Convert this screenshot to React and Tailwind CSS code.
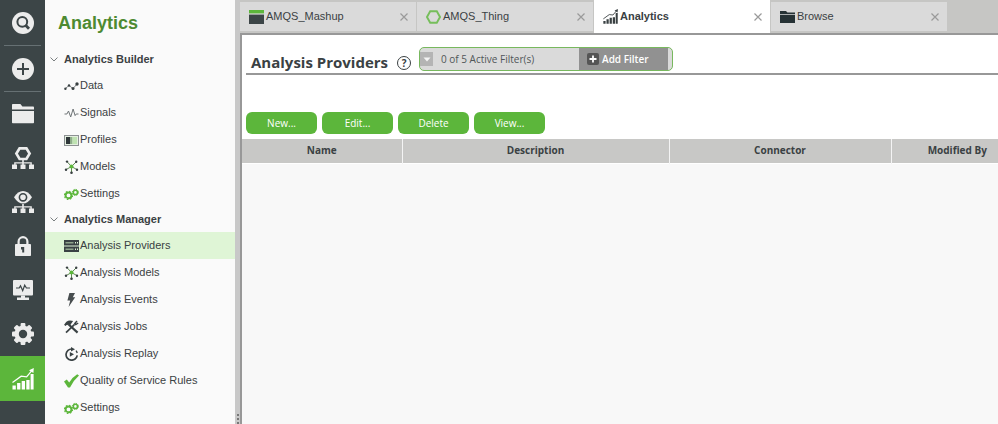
import React, { useState } from 'react';

const SearchIcon = () => (
  <svg viewBox="0 0 22 22" className="h-[22px] w-[22px]">
    <circle cx="11" cy="11" r="11" fill="#ececec" />
    <circle cx="10.3" cy="9.8" r="4.9" fill="none" stroke="#3c4547" strokeWidth="2" />
    <path d="M13.4 13 L17 16.8" stroke="#3c4547" strokeWidth="2.8" />
  </svg>
);

const PlusIcon = () => (
  <svg viewBox="0 0 22 22" className="h-[22px] w-[22px]">
    <circle cx="11" cy="11" r="11" fill="#ececec" />
    <path d="M11 5v12M5 11h12" stroke="#3c4547" strokeWidth="2" />
  </svg>
);

const FolderIcon = () => (
  <svg viewBox="0 0 22 20" className="h-5 w-[22px]" fill="#ececec">
    <path d="M0 0.8 Q0 0 0.8 0 H8.4 L10.4 2.6 H21.2 Q22 2.6 22 3.4 V5.4 H0Z" />
    <path d="M0 7 H22 V18.4 Q22 19.2 21.2 19.2 H0.8 Q0 19.2 0 18.4Z" />
  </svg>
);

const HierarchyBase = () => (
  <path
    d="M10.2 13h1.6v2.3h8v2.2H22V22h-5v-4.5h1.4v-1h-6.6v1h1.7V22h-5v-4.5h1.7v-1H3.6v1H5V22H0v-4.5h2.2v-2.2h8Z"
    fill="#ececec"
  />
);

const ThingsIcon = () => (
  <svg viewBox="0 0 22 22" className="h-[22px] w-[22px]">
    <path d="M7.6 1.3 H14.4 L17.6 6.6 L14.4 12 H7.6 L4.4 6.6Z" fill="none" stroke="#ececec" strokeWidth="2.7" />
    <HierarchyBase />
  </svg>
);

const VisibilityIcon = () => (
  <svg viewBox="0 0 22 22" className="h-[22px] w-[22px]">
    <path d="M2 6.3 Q6 0 11 0 T20 6.3 Q16 12.6 11 12.6 T2 6.3Z" fill="#ececec" />
    <circle cx="11" cy="6.3" r="3.6" fill="none" stroke="#3c4547" strokeWidth="1.6" />
    <HierarchyBase />
  </svg>
);

const LockIcon = () => (
  <svg viewBox="0 0 16 20" className="h-5 w-4">
    <path d="M3.6 9 V5.6 a4.4 4.4 0 0 1 8.8 0 V9" fill="none" stroke="#ececec" strokeWidth="2.2" />
    <rect y="8" width="16" height="12" rx="0.8" fill="#ececec" />
    <path d="M6 11h3.2v5.6H7.2v-3H6Z" fill="#3c4547" />
  </svg>
);

const MonitorIcon = () => (
  <svg viewBox="0 0 22 20" className="h-5 w-[22px]">
    <rect x="1" width="20" height="15.5" rx="1" fill="#ececec" />
    <path d="M9 15.5h4v2h4V20H5v-2.5h4Z" fill="#ececec" />
    <path d="M4 8h3.2l1.3-2.2 2.2 4.8 2-5.4L14.4 8H18" fill="none" stroke="#3c4547" strokeWidth="1.2" />
  </svg>
);

const GearIcon = () => (
  <svg viewBox="0 0 22 22" className="h-[22px] w-[22px]">
    <g fill="#ececec">
      <rect x="8.6" width="4.8" height="22" rx="1" />
      <rect x="8.6" width="4.8" height="22" rx="1" transform="rotate(45 11 11)" />
      <rect x="8.6" width="4.8" height="22" rx="1" transform="rotate(90 11 11)" />
      <rect x="8.6" width="4.8" height="22" rx="1" transform="rotate(135 11 11)" />
      <circle cx="11" cy="11" r="8.6" />
    </g>
    <circle cx="11" cy="11" r="4.2" fill="#3c4547" />
  </svg>
);

const ChartIcon = ({ className }) => (
  <svg viewBox="0 0 22 22" className={className} fill="currentColor">
    <path d="M0.5 17.5h3.3V21.5H0.5ZM5.1 15h3.3v6.5H5.1ZM9.7 13h3.3v8.5H9.7ZM14.3 12h3.3v9.5h-3.3ZM18.6 6h3v15.5h-3Z" />
    <path d="M0.5 14.5 L9.2 8.2 L14.6 8.8 L20.5 1.8" fill="none" stroke="currentColor" strokeWidth="1.3" />
    <path d="M17 2.2 L21.8 0 L21.4 5Z" />
  </svg>
);

const DataIcon = () => (
  <svg viewBox="0 0 15 14" className="h-[14px] w-[15px]" fill="#383f41">
    <path d="M1.2 9.8 L5 6.4 L9 9.6 L13.2 4.8" fill="none" stroke="#6d7375" strokeWidth="0.9" />
    <circle cx="1.4" cy="9.7" r="1.2" />
    <circle cx="5" cy="6.5" r="1.2" />
    <circle cx="9" cy="9.6" r="1.5" />
    <circle cx="13" cy="5" r="1.7" />
  </svg>
);

const SignalsIcon = () => (
  <svg viewBox="0 0 15 14" className="h-[14px] w-[15px]">
    <path d="M0.5 8h2.4l1.6-3 2.2 6 2.4-8 2 6.6L12.2 8h2.3" fill="none" stroke="#6f7577" strokeWidth="1" />
  </svg>
);

const ProfilesIcon = () => (
  <svg viewBox="0 0 15 14" className="h-[14px] w-[15px]">
    <rect x="0.5" y="2.5" width="14" height="10" fill="#e4efe0" stroke="#8d9193" />
    <rect x="2" y="4" width="4" height="7" fill="#2e3638" />
    <rect x="6" y="4" width="2.5" height="7" fill="#8fae8a" />
    <rect x="8.5" y="4" width="4.5" height="7" fill="#bfe3b2" />
  </svg>
);

const ModelsIcon = () => (
  <svg viewBox="0 0 15 14" className="h-[14px] w-[15px]" fill="#383f41">
    <path d="M7.5 6.6 L3 1.6M7.5 6.6 L12.2 1.8M7.5 6.6 L2 9.6M7.5 6.6 L13 9.6M7.5 6.6V13" stroke="#5f8a52" strokeWidth="1" />
    <circle cx="3" cy="1.6" r="1.2" />
    <circle cx="12.2" cy="1.8" r="1.2" />
    <circle cx="2" cy="9.8" r="1.2" />
    <circle cx="13" cy="9.8" r="1.2" />
    <circle cx="7.5" cy="12.7" r="1.3" />
    <circle cx="7.5" cy="6.6" r="2" fill="#5cb63b" />
  </svg>
);

const GearsIcon = () => (
  <svg viewBox="0 0 15 14" className="h-[14px] w-[15px]" fill="none" stroke="#5cb63b">
    <circle cx="4.5" cy="8.4" r="2.9" strokeWidth="1.9" />
    <circle cx="4.5" cy="8.4" r="4.1" strokeWidth="1.1" strokeDasharray="1.61 1.61" />
    <circle cx="11.4" cy="5.4" r="2.1" strokeWidth="1.6" />
    <circle cx="11.4" cy="5.4" r="3.1" strokeWidth="1" strokeDasharray="1.22 1.22" />
  </svg>
);

const ProvidersIcon = () => (
  <svg viewBox="0 0 15 14" className="h-[14px] w-[15px]">
    <path d="M0 1h15v5.4H0ZM0 7.6h15V13H0Z" fill="#3a4244" />
    <path d="M1.5 3h8v1.4h-8ZM1.5 9.6h8v1.4h-8Z" fill="#8fa38c" />
    <path d="M11 3h1v1.4h-1ZM13 3h1v1.4h-1ZM11 9.6h1v1.4h-1ZM13 9.6h1v1.4h-1Z" fill="#dff5d6" />
  </svg>
);

const EventsIcon = () => (
  <svg viewBox="0 0 15 14" className="h-[14px] w-[15px]">
    <path d="M5.4 0 H11 L8.8 4.2 H11.2 L4.6 14 L6.2 7.6 H3.4Z" fill="#474d4f" />
  </svg>
);

const JobsIcon = () => (
  <svg viewBox="0 0 15 14" className="h-[14px] w-[15px]" fill="none" stroke="#3a4244">
    <path d="M4.4 4.2 L13.6 12.6" strokeWidth="2.2" />
    <path d="M0.8 5.4 L3 2.4 Q5 0.9 7.6 1.6 L5.4 4.6" strokeWidth="1.8" fill="#3a4244" />
    <path d="M2 12.6 L10.6 4.4" strokeWidth="1.7" />
    <path d="M13 1 L10.8 3.4 L11.8 4.6 L14.2 3" strokeWidth="1.5" />
  </svg>
);

const ReplayIcon = () => (
  <svg viewBox="0 0 15 14" className="h-[14px] w-[15px]">
    <path d="M8 2 A5.6 5.6 0 1 0 13.2 8.4" fill="none" stroke="#3a4244" strokeWidth="1.7" />
    <path d="M12 3.6 A5.6 5.6 0 0 1 13.2 6" fill="none" stroke="#3a4244" strokeWidth="1.4" />
    <path d="M7 0 L11 2.2 L7 4.4Z" fill="#3a4244" />
    <path d="M5.8 5 L10 7.3 L5.8 9.8Z" fill="#3a4244" />
  </svg>
);

const CheckIcon = () => (
  <svg viewBox="0 0 15 14" className="h-[14px] w-[15px]">
    <path d="M0 7.6 L2.8 5.6 L5.2 8.4 Q8.6 3 13.2 0.2 L15 1.6 Q9.4 6.6 6 13.4 H4Z" fill="#5cb63b" />
  </svg>
);

const MashupIcon = () => (
  <svg viewBox="0 0 15 14" className="h-[14px] w-[15px]">
    <rect width="15" height="3.4" fill="#5cb63b" />
    <rect y="4.6" width="15" height="9.4" fill="#3c4547" />
  </svg>
);

const ThingIcon = () => (
  <svg viewBox="0 0 15 14" className="h-[14px] w-[15px]">
    <path d="M4.2 1.2h6.6L14 7l-3.2 5.8H4.2L1 7Z" fill="none" stroke="#76be5b" strokeWidth="1.9" />
  </svg>
);

const BrowseIcon = () => (
  <svg viewBox="0 0 15 14" className="h-[14px] w-[15px]" fill="#263235">
    <path d="M0 1h6l1.4 1.6H15v1.6H0ZM0 5h15v8H0Z" />
  </svg>
);

const CloseIcon = () => (
  <svg viewBox="0 0 8 8" className="h-2 w-2">
    <path d="M0.5 0.5l7 7M7.5 0.5l-7 7" stroke="#9a9a9a" strokeWidth="1.2" />
  </svg>
);

const Chevron = () => (
  <svg viewBox="0 0 8 5" className="h-[5px] w-2">
    <path d="M0.5 0.5 L4 4 L7.5 0.5" fill="none" stroke="#7a7f80" strokeWidth="1" />
  </svg>
);

const railItems = [
  { label: 'Browse', icon: FolderIcon },
  { label: 'Modeling', icon: ThingsIcon },
  { label: 'Visualization', icon: VisibilityIcon },
  { label: 'Security', icon: LockIcon },
  { label: 'Monitoring', icon: MonitorIcon },
  { label: 'System', icon: GearIcon },
];

const sections = [
  {
    title: 'Analytics Builder',
    items: [
      { label: 'Data', icon: DataIcon },
      { label: 'Signals', icon: SignalsIcon },
      { label: 'Profiles', icon: ProfilesIcon },
      { label: 'Models', icon: ModelsIcon },
      { label: 'Settings', icon: GearsIcon },
    ],
  },
  {
    title: 'Analytics Manager',
    items: [
      { label: 'Analysis Providers', icon: ProvidersIcon, active: true },
      { label: 'Analysis Models', icon: ModelsIcon },
      { label: 'Analysis Events', icon: EventsIcon },
      { label: 'Analysis Jobs', icon: JobsIcon },
      { label: 'Analysis Replay', icon: ReplayIcon },
      { label: 'Quality of Service Rules', icon: CheckIcon },
      { label: 'Settings', icon: GearsIcon },
    ],
  },
];

const tabs = [
  { label: 'AMQS_Mashup', icon: MashupIcon },
  { label: 'AMQS_Thing', icon: ThingIcon },
  { label: 'Analytics', icon: () => <ChartIcon className="h-[15px] w-[15px]" />, active: true },
  { label: 'Browse', icon: BrowseIcon },
];

const actions = ['New...', 'Edit...', 'Delete', 'View...'];

const Rail = () => (
  <div className="flex w-[45px] shrink-0 flex-col bg-[#3c4547]">
    <button aria-label="Search" className="flex h-[45px] items-center justify-center">
      <SearchIcon />
    </button>
    <div className="mx-1 h-px bg-[#667073]" />
    <button aria-label="New" className="flex h-[45px] items-center justify-center">
      <PlusIcon />
    </button>
    <div className="mx-1 h-px bg-[#667073]" />
    {railItems.map(({ label, icon: Icon }) => (
      <button key={label} aria-label={label} className="flex h-11 items-center justify-center">
        <Icon />
      </button>
    ))}
    <button aria-label="Analytics" className="flex h-[45px] items-center justify-center bg-[#5cb63b] text-white">
      <ChartIcon className="h-[22px] w-[22px]" />
    </button>
  </div>
);

const Sidebar = () => (
  <aside className="w-[190px] shrink-0 bg-[#fafafa] pt-2">
    <h2 className="mb-2 pl-[13px] text-[18px] leading-[31px] font-bold text-[#4d8a31]">Analytics</h2>
    <nav>
      {sections.map((section) => (
        <div key={section.title}>
          <button className="flex h-[25px] w-full items-center gap-[6px] pl-[5px] text-[11px] font-bold">
            <Chevron />
            {section.title}
          </button>
          {section.items.map(({ label, icon: Icon, active }) => (
            <a
              key={label}
              href="#"
              className={`flex h-[27px] items-center gap-px pl-[19px] text-[11px] ${active ? 'bg-[#dff5d6]' : ''}`}
            >
              <Icon />
              {label}
            </a>
          ))}
        </div>
      ))}
    </nav>
  </aside>
);

const TabBar = () => (
  <div className="flex h-[33px] shrink-0 gap-px bg-[#c6c6c4]">
    {tabs.map(({ label, icon: Icon, active }) => (
      <div
        key={label}
        className={`flex w-[176px] items-center pr-2 pl-[9px] text-[11px] ${
          active ? 'bg-white font-bold' : 'mt-[2px] mb-[2px] bg-[#dadada]'
        }`}
      >
        <button className="flex flex-1 items-center gap-[2px]">
          <Icon />
          {label}
        </button>
        <button aria-label={`Close ${label}`}>
          <CloseIcon />
        </button>
      </div>
    ))}
  </div>
);

const FilterBar = () => (
  <div className="flex h-6 w-[254px] overflow-hidden rounded-[5px] border border-[#78b85e] bg-[#dadada] text-[10px]">
    <button aria-label="Show filters" className="my-1 flex w-[13px] items-center justify-center bg-[#b4b4b4]">
      <svg viewBox="0 0 8 5" className="h-[5px] w-2">
        <path d="M0.5 0.5h7L4 4.5Z" fill="#f4f4f4" />
      </svg>
    </button>
    <span className="flex flex-1 items-center pl-2 text-[#505658]">0 of 5 Active Filter(s)</span>
    <button className="mr-1 flex w-[89px] items-center gap-[3px] bg-[#919191] pl-2 font-semibold text-white">
      <svg viewBox="0 0 12 12" className="h-3 w-3">
        <rect width="12" height="12" rx="2" fill="#555" />
        <path d="M6 2.5v7M2.5 6h7" stroke="#fff" strokeWidth="1.8" />
      </svg>
      Add Filter
    </button>
  </div>
);

const App = () => {
  const [showHelp, setShowHelp] = useState(false);

  return (
    <div className="flex h-screen overflow-hidden bg-white font-['Liberation_Sans',Arial,sans-serif] text-[#3a4143]">
      <Rail />
      <Sidebar />
      <div className="flex w-[5px] shrink-0 flex-col items-center justify-end gap-[2px] bg-[#c8c8c8]">
        <span className="h-[2px] w-[2px] bg-[#777]" />
        <span className="h-[2px] w-[2px] bg-[#777]" />
        <span className="h-[2px] w-[2px] bg-[#777]" />
      </div>

      <div className="flex min-w-0 flex-1 flex-col">
        <TabBar />
        <main className="flex min-h-0 flex-1 flex-col border-t-2 border-l-2 border-[#989898] font-['Open_Sans','Noto_Sans',sans-serif]">
          <header className="ml-1 flex h-10 items-end border-b-2 border-[#989898] pl-[5px]">
            <h1 className="text-[15px] leading-[22px] font-bold">Analysis Providers</h1>
            <button
              aria-label="Help"
              title={showHelp ? 'Analysis Providers' : undefined}
              onClick={() => setShowHelp(!showHelp)}
              className="mr-2 mb-[3px] ml-[9px] flex h-[14px] w-[14px] items-center justify-center rounded-full border border-[#3a4143] text-[10px] font-bold"
            >
              ?
            </button>
            <div className="mb-[2px]">
              <FilterBar />
            </div>
          </header>

          <div className="mt-[37px] mb-[5px] ml-1 flex gap-[5px]">
            {actions.map((action) => (
              <button key={action} className="h-[22px] w-[71px] rounded-md bg-[#5cb63b] text-[10px] text-white">
                {action}
              </button>
            ))}
          </div>

          <div className="flex-1 overflow-hidden bg-[#f8f8f8]">
            <table className="w-[781px] min-w-full table-fixed border-collapse text-[10px]">
              <thead>
                <tr className="h-6 border-b border-white bg-[#c8c8c6]">
                  <th className="w-[160px] border-r border-[#f4f4f4] font-bold">Name</th>
                  <th className="w-[267px] border-r border-[#f4f4f4] font-bold">Description</th>
                  <th className="w-[222px] border-r border-[#f4f4f4] font-bold">Connector</th>
                  <th className="font-bold">Modified By</th>
                </tr>
              </thead>
              <tbody />
            </table>
          </div>
        </main>
      </div>
    </div>
  );
};

export default App;
